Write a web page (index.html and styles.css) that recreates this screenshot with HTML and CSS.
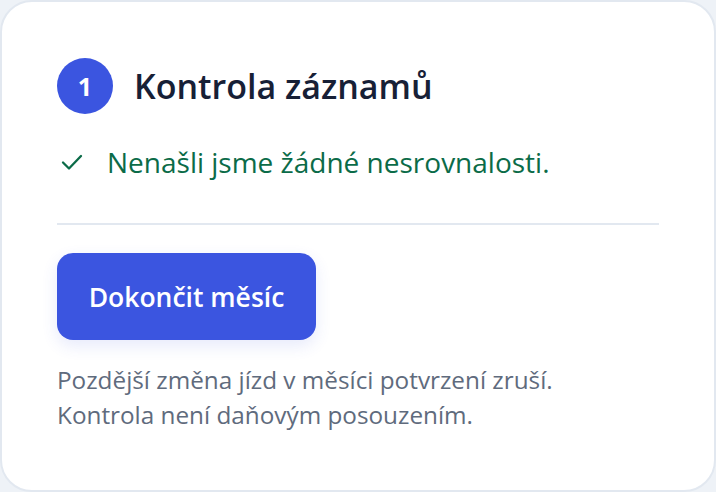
FILE: index.html
```html
<!DOCTYPE html>
<html lang="cs">

<head>
    <meta charset="utf-8">
    <meta name="viewport" content="width=device-width, initial-scale=1.0">
    <title>Kontrola záznamů</title>
    <link rel="stylesheet" href="styles.css">
</head>

<body>

    <section class="karta">

        <header class="krok">
            <span class="cislo">1</span>
            <h2>Kontrola záznamů</h2>
        </header>

        <p class="ok">
            <svg class="fajfka" viewBox="0 0 24 24" width="24" height="24" aria-hidden="true">
                <path d="M3 12.5l6 6L21 6" fill="none" stroke="currentColor" stroke-width="2.3" stroke-linecap="round" stroke-linejoin="round" />
            </svg>
            Nenašli jsme žádné nesrovnalosti.
        </p>

        <hr class="cara">

        <button class="dokoncit">Dokončit měsíc</button>

        <p class="pozn">
            Pozdější změna jízd v měsíci potvrzení zruší.<br>
            Kontrola není daňovým posouzením.
        </p>

    </section>

</body>

</html>
```

FILE: styles.css
```css
body {
    margin: 0;
    padding: 0;
    background-color: #eef2f7;
    font-family: "Open Sans", "Noto Sans", sans-serif;
}

.karta {
    box-sizing: border-box;
    width: 716px;
    height: 492px;
    background-color: #fff;
    border: 2px solid #e2e8f0;
    border-radius: 32px;
    padding: 56px 55px 0 55px;
}

.krok {
    display: flex;
    align-items: center;
    gap: 21px;
}

.cislo {
    display: flex;
    align-items: center;
    justify-content: center;
    width: 56px;
    height: 56px;
    border-radius: 50%;
    background-color: #3b55e0;
    color: #fff;
    font-size: 25px;
    font-weight: 700;
}

.krok h2 {
    margin: 0;
    font-size: 34px;
    font-weight: 600;
    color: #172036;
}

.ok {
    display: flex;
    align-items: center;
    gap: 23px;
    margin: 32px 0 0 0;
    height: 32px;
    font-size: 28px;
    color: #0b6b48;
    padding-left: 3px;
}

.fajfka {
    color: #0b6b48;
}

.cara {
    margin: 45px 0 0 0;
    border: none;
    height: 2px;
    background-color: #e2e8f0;
}

.dokoncit {
    margin-top: 28px;
    width: 259px;
    height: 87px;
    border: none;
    border-radius: 16px;
    background-color: #3b55e0;
    color: #fff;
    font-family: inherit;
    font-size: 26.5px;
    font-weight: 600;
    box-shadow: 0 6px 16px rgba(59, 85, 224, 0.12);
}

.pozn {
    margin: 22px 0 0 0;
    font-size: 24.3px;
    line-height: 35px;
    color: #5f6b7d;
}
```
